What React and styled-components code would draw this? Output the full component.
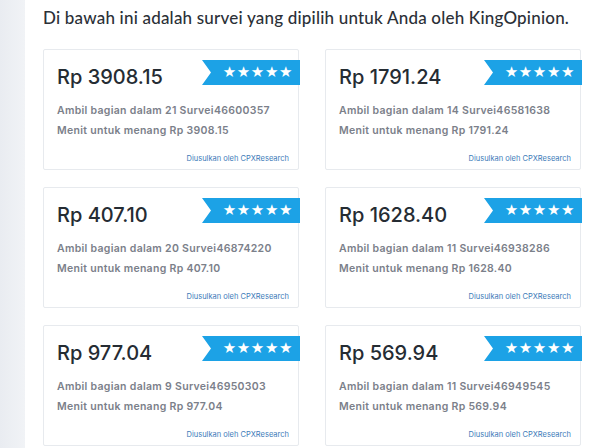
import React from 'react'
import styled, { createGlobalStyle } from 'styled-components'

const GlobalStyle = createGlobalStyle`
  html, body {
    margin: 0;
    padding: 0;
    background: #ffffff;
  }
  body {
    font-family: Inter, "Noto Sans", "Liberation Sans", sans-serif;
    -webkit-font-smoothing: antialiased;
  }
`

const Page = styled.div`
  display: flex;
  min-height: 448px;
  overflow: hidden;
`

const Sidebar = styled.div`
  flex: 0 0 25px;
  background: linear-gradient(90deg, #e9ecf1 0%, #f1f3f6 100%);
`

const Main = styled.div`
  flex: 1;
  padding: 6px 0 0 18px;
`

const Heading = styled.h2`
  margin: 0 0 19px;
  font-family: Lato, "Noto Sans", sans-serif;
  font-size: 17px;
  line-height: 24px;
  font-weight: 500;
  color: #2b3037;
  letter-spacing: 0.2px;
  white-space: nowrap;
`

const Grid = styled.div`
  display: grid;
  grid-template-columns: 256px 256px;
  column-gap: 26px;
  row-gap: 17px;
`

const Card = styled.div`
  position: relative;
  box-sizing: border-box;
  height: 121px;
  background: #ffffff;
  border: 1px solid #e7eaee;
  border-radius: 2px;
  padding: 15px 9px 0 13px;
  display: flex;
  flex-direction: column;
`

const Ribbon = styled.div`
  position: absolute;
  top: 10px;
  right: -2px;
  width: 98px;
  height: 25px;
  background: #1ca2e6;
  clip-path: polygon(0 0, 100% 0, 100% 100%, 0 100%, 9px 50%);
  display: flex;
  align-items: center;
  justify-content: flex-end;
  padding-right: 7px;
  box-sizing: border-box;
`

const Stars = styled.span`
  color: #ffffff;
  font-family: "DejaVu Sans", sans-serif;
  font-size: 15px;
  letter-spacing: 0.6px;
  line-height: 1;
`

const Price = styled.div`
  font-size: 20px;
  line-height: 24px;
  font-weight: 500;
  color: #252c33;
  margin-bottom: 12px;
`

const Info = styled.div`
  font-size: 10.5px;
  line-height: 20px;
  font-weight: 600;
  color: #7b808a;
  letter-spacing: 0.3px;
`

const Source = styled.div`
  margin-top: auto;
  margin-bottom: 4px;
  text-align: right;
  font-size: 7.5px;
  line-height: 12px;
  color: #3d7bb9;
`

const surveys = [
  { amount: '3908.15', minutes: 21, id: '46600357' },
  { amount: '1791.24', minutes: 14, id: '46581638' },
  { amount: '407.10', minutes: 20, id: '46874220' },
  { amount: '1628.40', minutes: 11, id: '46938286' },
  { amount: '977.04', minutes: 9, id: '46950303' },
  { amount: '569.94', minutes: 11, id: '46949545' },
]

const SurveyCard = ({ amount, minutes, id }) => (
  <Card>
    <Ribbon>
      <Stars>★★★★★</Stars>
    </Ribbon>
    <Price>Rp {amount}</Price>
    <Info>Ambil bagian dalam {minutes} Survei{id}</Info>
    <Info>Menit untuk menang Rp {amount}</Info>
    <Source>Diusulkan oleh CPXResearch</Source>
  </Card>
)

export default function App() {
  return (
    <Page>
      <GlobalStyle />
      <Sidebar />
      <Main>
        <Heading>Di bawah ini adalah survei yang dipilih untuk Anda oleh KingOpinion.</Heading>
        <Grid>
          {surveys.map(s => (
            <SurveyCard key={s.id} {...s} />
          ))}
        </Grid>
      </Main>
    </Page>
  )
}
